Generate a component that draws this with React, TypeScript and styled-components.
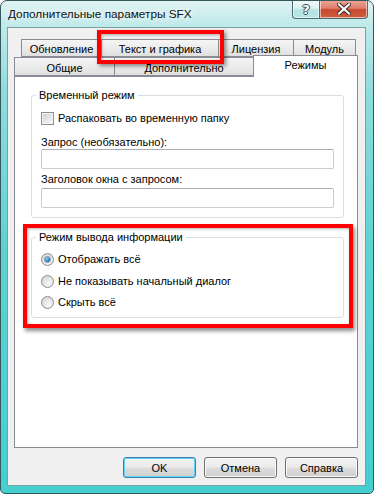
import React from 'react'
import styled, { createGlobalStyle } from 'styled-components'

const GlobalStyle = createGlobalStyle`
    html, body {
        margin: 0;
        padding: 0;
        background: #fff;
    }
    body {
        font-family: "Liberation Sans", Arial, sans-serif;
        font-size: 11px;
        color: #000;
    }
`

const Window = styled.div`
    width: 374px;
    height: 494px;
    box-sizing: border-box;
    border: 1px solid #34585b;
    border-radius: 7px 7px 5px 5px;
    background: linear-gradient(180deg, #e2f3f3 0px, #c3ebeb 20px, #8fdcdd 90px, #5dd2d3 250px, #45cfcf 100%);
    display: flex;
    flex-direction: column;
    overflow: hidden;
`

const TitleBar = styled.div`
    height: 26px;
    flex: none;
    display: flex;
    align-items: flex-start;
`

const Title = styled.div`
    padding: 6px 0 0 7px;
    line-height: 14px;
    font-size: 11.8px;
    color: #111;
    text-shadow: 0 0 6px #fff, 0 0 10px #fff;
`

const CaptionButtons = styled.div`
    margin: -1px 5px 0 auto;
    display: flex;
`

const CaptionButton = styled.div<{ $close?: boolean }>`
    width: ${p => (p.$close ? 48 : 28)}px;
    height: 19px;
    box-sizing: border-box;
    border: 1px solid #4d6b70;
    border-top: none;
    border-left: ${p => (p.$close ? 'none' : '1px solid #4d6b70')};
    border-radius: ${p => (p.$close ? '0 0 4px 0' : '0 0 0 4px')};
    background: ${p =>
        p.$close
            ? 'linear-gradient(180deg, #eaa895 0%, #de806b 45%, #c8462d 55%, #d0603f 100%)'
            : 'linear-gradient(180deg, rgba(255,255,255,0.55) 0%, rgba(220,245,246,0.5) 45%, rgba(150,215,218,0.5) 55%, rgba(170,225,228,0.6) 100%)'};
    box-shadow: inset 0 0 0 1px rgba(255, 255, 255, 0.55);
    display: flex;
    align-items: center;
    justify-content: center;
`

const HelpGlyph = styled.span`
    font-family: "DejaVu Sans", sans-serif;
    font-weight: bold;
    font-size: 13px;
    line-height: 13px;
    color: #fff;
    text-shadow: 1px 0 0 #2f4c52, -1px 0 0 #2f4c52, 0 1px 0 #2f4c52, 0 -1px 0 #2f4c52;
`

const Client = styled.div`
    flex: 1;
    margin: 0 7px 7px 6px;
    border: 1px solid #7d9fa2;
    background: #f0f0f0;
    padding: 11px 7px 7px 6px;
    display: flex;
    flex-direction: column;
    min-height: 0;
`

const Tabs = styled.div`
    display: flex;
    flex-direction: column;
    flex: none;
`

const TabRow = styled.div<{ $indent: number }>`
    display: flex;
    align-items: flex-start;
    padding-left: ${p => p.$indent}px;
    height: ${p => (p.$indent ? 18 : 19)}px;
`

const Tab = styled.div<{ $width: number; $active?: boolean }>`
    position: relative;
    width: ${p => p.$width}px;
    box-sizing: border-box;
    border: 1px solid #898c95;
    border-bottom: ${p => (p.$active ? 'none' : '1px solid #898c95')};
    background: ${p => (p.$active ? '#fff' : 'linear-gradient(180deg, #f5f5f5 0%, #ebebeb 50%, #e0e0e0 100%)')};
    height: ${p => (p.$active ? 22 : 18)}px;
    margin-top: ${p => (p.$active ? -2 : 0)}px;
    margin-bottom: ${p => (p.$active ? -1 : 0)}px;
    margin-left: -1px;
    z-index: ${p => (p.$active ? 1 : 'auto')};
    text-align: center;
    line-height: 14px;
    padding-top: 2px;
    white-space: nowrap;
    &:first-child {
        margin-left: 0;
    }
`

const LowTab = styled(Tab)`
    height: ${p => (p.$active ? 22 : 19)}px;
    padding-top: ${p => (p.$active ? 2 : 3)}px;
`

const Highlight = styled.div<{ $l: number; $t: number; $r: number; $b: number }>`
    position: absolute;
    left: ${p => p.$l}px;
    top: ${p => p.$t}px;
    right: ${p => p.$r}px;
    bottom: ${p => p.$b}px;
    border: 4px solid #ff0000;
    box-shadow: 2px 2px 4px rgba(0, 0, 0, 0.45), inset 1px 1px 3px rgba(0, 0, 0, 0.3);
    z-index: 3;
    pointer-events: none;
`

const Panel = styled.div`
    flex: 1;
    background: #fff;
    border: 1px solid #898c95;
    padding: 11px 13px 0 16px;
    display: flex;
    flex-direction: column;
    min-height: 0;
`

const Group = styled.fieldset<{ $bottom: number }>`
    margin: 0;
    padding: 0 9px ${p => p.$bottom}px 9px;
    border: 1px solid #d5dfe5;
    border-radius: 3px;
    min-inline-size: 0;
    display: flex;
    flex-direction: column;
`

const Legend = styled.legend`
    padding: 0 3px;
    margin-left: -5px;
    line-height: 14px;
    font-size: 11px;
    color: #000;
`

const RedFrame = styled.div`
    margin: 6px -9px 0 -8px;
    border: 4px solid #ff0000;
    padding: 2px 5px 6px 4px;
    box-shadow: 2px 3px 4px rgba(0, 0, 0, 0.45), inset 1px 1px 3px rgba(0, 0, 0, 0.3);
`

const OptionRow = styled.label<{ $gap: number }>`
    display: flex;
    align-items: center;
    gap: 4px;
    height: 14px;
    line-height: 14px;
    margin-top: ${p => p.$gap}px;
    white-space: nowrap;
`

const CheckBox = styled.span`
    width: 13px;
    height: 13px;
    box-sizing: border-box;
    border: 1px solid #8e8f8f;
    background: linear-gradient(135deg, #c9ccd1 0%, #e8e9eb 60%, #f7f7f7 100%);
    box-shadow: inset 0 0 0 1px #f4f4f4;
    flex: none;
`

const Radio = styled.span<{ $checked?: boolean }>`
    width: 13px;
    height: 13px;
    box-sizing: border-box;
    border-radius: 50%;
    border: 1px solid #8c8e8e;
    background: radial-gradient(circle at 65% 70%, #fafafa 0%, #e4e4e4 50%, #cfcfcf 100%);
    display: flex;
    align-items: center;
    justify-content: center;
    flex: none;
    &::after {
        content: '';
        display: ${p => (p.$checked ? 'block' : 'none')};
        width: 5px;
        height: 5px;
        border-radius: 50%;
        background: radial-gradient(circle at 40% 35%, #8ed4f8 0%, #2a88c8 50%, #0b4a86 100%);
        box-shadow: 0 0 0 1px rgba(20, 70, 120, 0.4);
    }
`

const FieldLabel = styled.div<{ $gap: number }>`
    line-height: 14px;
    margin-top: ${p => p.$gap}px;
`

const TextInput = styled.div<{ $gap: number }>`
    height: 20px;
    box-sizing: border-box;
    margin-top: ${p => p.$gap}px;
    border: 1px solid #c6cdd4;
    border-top-color: #abadb3;
    border-radius: 2px;
    background: #fff;
`

const ButtonRow = styled.div`
    display: flex;
    justify-content: flex-end;
    gap: 8px;
    margin-top: 9px;
    flex: none;
`

const Button = styled.div<{ $default?: boolean }>`
    width: 73px;
    height: 21px;
    box-sizing: border-box;
    border: 1px solid ${p => (p.$default ? '#3c7fb1' : '#707070')};
    border-radius: 3px;
    background: linear-gradient(180deg, #f2f2f2 0%, #ebebeb 48%, #dddddd 52%, #cfcfcf 100%);
    box-shadow: inset 0 0 0 1px ${p => (p.$default ? '#5fd3f8' : '#fbfbfb')};
    display: flex;
    align-items: center;
    justify-content: center;
    line-height: 14px;
`

const CloseIcon = () => (
    <svg width="14" height="12" viewBox="0 0 14 12">
        <path d="M2 1.5 L12 10.5 M12 1.5 L2 10.5" stroke="#3b2a26" strokeWidth="4.2" strokeLinecap="square" />
        <path d="M2 1.5 L12 10.5 M12 1.5 L2 10.5" stroke="#ffffff" strokeWidth="2.2" strokeLinecap="square" />
    </svg>
)

export default function App() {
    return (
        <>
            <GlobalStyle />
            <Window>
                <TitleBar>
                    <Title>Дополнительные параметры SFX</Title>
                    <CaptionButtons>
                        <CaptionButton>
                            <HelpGlyph>?</HelpGlyph>
                        </CaptionButton>
                        <CaptionButton $close>
                            <CloseIcon />
                        </CaptionButton>
                    </CaptionButtons>
                </TitleBar>
                <Client>
                    <Tabs>
                        <TabRow $indent={7}>
                            <Tab $width={81}>Обновление</Tab>
                            <Tab $width={118}>
                                Текст и графика
                                <Highlight $l={-5} $t={-10} $r={-6} $b={-8} />
                            </Tab>
                            <Tab $width={76}>Лицензия</Tab>
                            <Tab $width={63}>Модуль</Tab>
                        </TabRow>
                        <TabRow $indent={0}>
                            <LowTab $width={101}>Общие</LowTab>
                            <LowTab $width={140}>Дополнительно</LowTab>
                            <LowTab $width={105} $active>Режимы</LowTab>
                        </TabRow>
                    </Tabs>
                    <Panel>
                        <Group $bottom={9}>
                            <Legend>Временный режим</Legend>
                            <OptionRow $gap={9}>
                                <CheckBox />
                                Распаковать во временную папку
                            </OptionRow>
                            <FieldLabel $gap={10}>Запрос (необязательно):</FieldLabel>
                            <TextInput $gap={0} />
                            <FieldLabel $gap={3}>Заголовок окна с запросом:</FieldLabel>
                            <TextInput $gap={2} />
                        </Group>
                        <RedFrame>
                            <Group $bottom={8}>
                                <Legend>Режим вывода информации</Legend>
                                <OptionRow $gap={8}>
                                    <Radio $checked />
                                    Отображать всё
                                </OptionRow>
                                <OptionRow $gap={8}>
                                    <Radio />
                                    Не показывать начальный диалог
                                </OptionRow>
                                <OptionRow $gap={7}>
                                    <Radio />
                                    Скрыть всё
                                </OptionRow>
                            </Group>
                        </RedFrame>
                    </Panel>
                    <ButtonRow>
                        <Button $default>OK</Button>
                        <Button>Отмена</Button>
                        <Button>Справка</Button>
                    </ButtonRow>
                </Client>
            </Window>
        </>
    )
}
